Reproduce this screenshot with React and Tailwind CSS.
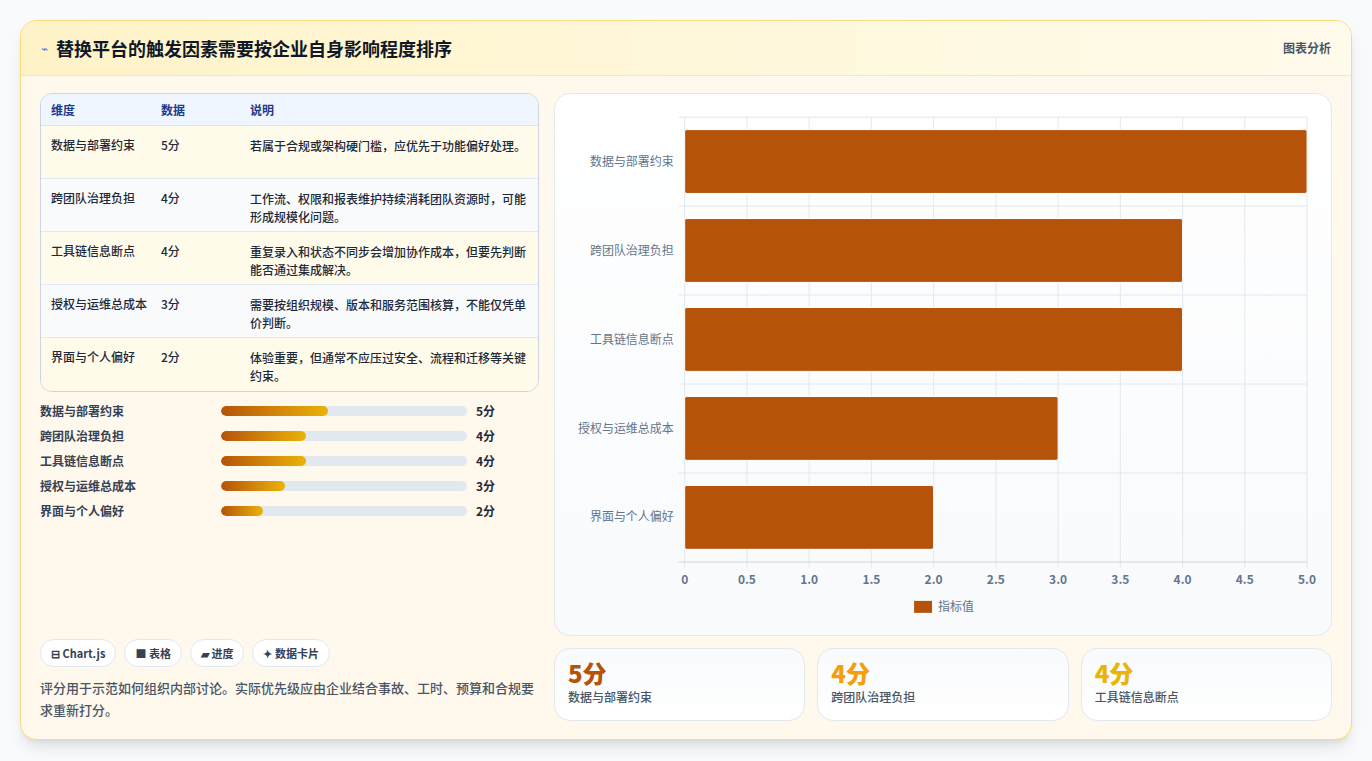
const rows = [
  { name: "数据与部署约束", score: 5, note: "若属于合规或架构硬门槛，应优先于功能偏好处理。", w: 107 },
  { name: "跨团队治理负担", score: 4, note: "工作流、权限和报表维护持续消耗团队资源时，可能形成规模化问题。", w: 85 },
  { name: "工具链信息断点", score: 4, note: "重复录入和状态不同步会增加协作成本，但要先判断能否通过集成解决。", w: 85 },
  { name: "授权与运维总成本", score: 3, note: "需要按组织规模、版本和服务范围核算，不能仅凭单价判断。", w: 64 },
  { name: "界面与个人偏好", score: 2, note: "体验重要，但通常不应压过安全、流程和迁移等关键约束。", w: 42 },
];

const font = { fontFamily: '"Noto Sans CJK SC", "Noto Sans", sans-serif' };

function Chart() {
  const x0 = 130, x1 = 754, y0 = 23, y1 = 469;
  const step = (x1 - x0) / 10;
  const rowH = (y1 - y0) / 5;
  return (
    <svg viewBox="0 0 778 542" className="w-full h-full" style={font}>
      {Array.from({ length: 11 }).map((_, i) => (
        <line key={i} x1={x0 + i * step} x2={x0 + i * step} y1={y0} y2={y1 + 6} stroke="#e2e8f0" />
      ))}
      {Array.from({ length: 6 }).map((_, i) => (
        <line key={i} x1={x0 - 6} x2={x1} y1={y0 + i * rowH} y2={y0 + i * rowH} stroke={i === 5 ? "#cbd5e1" : "#e2e8f0"} />
      ))}
      {rows.map((r, i) => (
        <g key={r.name}>
          <rect x={x0} y={y0 + i * rowH + 12.5} width={r.score * 2 * step} height={64} fill="#b45309" stroke="#fff" strokeWidth="1" rx="2" />
          <text x={x0 - 11} y={y0 + i * rowH + rowH / 2 + 4} textAnchor="end" fontSize="12" fill="#64748b">{r.name}</text>
        </g>
      ))}
      {Array.from({ length: 11 }).map((_, i) => (
        <text key={i} x={x0 + i * step} y={491} textAnchor="middle" fontSize="12" fontWeight="600" fill="#64748b">
          {i === 0 ? "0" : (i / 2).toFixed(1)}
        </text>
      ))}
      <rect x={360} y={508} width={18} height={12} fill="#b45309" />
      <text x={384} y={518} fontSize="12" fill="#64748b">指标值</text>
    </svg>
  );
}

export default function App() {
  return (
    <div className="min-h-screen bg-gray-50 p-5 pb-6" style={font}>
      <div className="rounded-2xl border border-[#fcd97a] bg-[#fff8ec] shadow-lg overflow-hidden">
        <div className="flex items-center justify-between h-[55px] px-5 bg-gradient-to-r from-[#fef3c7] to-[#fffbeb] border-b border-[#f3e6c4]">
          <div className="flex items-center gap-2">
            <span className="text-[#3b82f6] text-xs">⌁</span>
            <h1 className="text-lg font-bold text-gray-900">替换平台的触发因素需要按企业自身影响程度排序</h1>
          </div>
          <span className="text-xs font-semibold text-gray-600">图表分析</span>
        </div>
        <div className="flex gap-[15px] px-[19px] pt-[17px] pb-[18px]">
          <div className="w-[499px] flex flex-col">
            <div className="rounded-xl border border-[#cbd5e1] overflow-hidden text-xs">
              <div className="flex h-8 items-center bg-[#eff6ff] font-semibold text-[#1e3a8a] border-b border-[#dbe3ee]">
                <div className="w-[120px] pl-[10px]">维度</div>
                <div className="w-[89px]">数据</div>
                <div className="flex-1">说明</div>
              </div>
              {rows.map((r, i) => (
                <div key={r.name} className={`flex h-[53px] pt-[11px] text-gray-800 ${i % 2 === 0 ? "bg-[#fffbeb]" : "bg-[#f8fafc]"} ${i < 4 ? "border-b border-[#e2e8f0]" : ""}`}>
                  <div className="w-[120px] pl-[10px] font-medium">{r.name}</div>
                  <div className="w-[89px] font-medium">{r.score}分</div>
                  <div className="flex-1 pr-3 leading-[18px] font-medium">{r.note}</div>
                </div>
              ))}
            </div>
            <div className="mt-[10px] flex flex-col gap-[7px]">
              {rows.map((r) => (
                <div key={r.name} className="flex items-center h-[18px] text-xs font-semibold text-gray-700">
                  <div className="w-[181px]">{r.name}</div>
                  <div className="w-[246px] h-[10px] rounded-full bg-[#e2e8f0] overflow-hidden">
                    <div className="h-full rounded-full bg-gradient-to-r from-[#b45309] to-[#eab308]" style={{ width: r.w }} />
                  </div>
                  <div className="ml-[9px] text-gray-800">{r.score}分</div>
                </div>
              ))}
            </div>
            <div className="flex-1" />
            <div className="flex gap-2 text-[11px] font-semibold text-gray-700">
              {["⊟ Chart.js", "■ 表格", "▰ 进度", "✦ 数据卡片"].map((t) => (
                <span key={t} className="rounded-full border border-[#e2e8f0] bg-white px-[10px] h-7 flex items-center">{t}</span>
              ))}
            </div>
            <p className="mt-[10px] text-[13px] leading-[22px] font-medium text-gray-600">评分用于示范如何组织内部讨论。实际优先级应由企业结合事故、工时、预算和合规要求重新打分。</p>
          </div>
          <div className="flex-1 flex flex-col gap-3">
            <div className="h-[543px] rounded-2xl border border-[#e2e8f0] bg-gradient-to-b from-white to-[#f8fafc]">
              <Chart />
            </div>
            <div className="grid grid-cols-3 gap-3">
              {[["5分", "text-[#b45309]", "数据与部署约束"], ["4分", "text-[#f59e0b]", "跨团队治理负担"], ["4分", "text-[#eab308]", "工具链信息断点"]].map(([v, c, l]) => (
                <div key={l} className="h-[73px] rounded-2xl border border-[#e2e8f0] bg-gradient-to-b from-[#f8fafc] to-white px-[13px] pt-2">
                  <div className={`text-2xl font-extrabold ${c}`}>{v}</div>
                  <div className="text-xs font-medium text-gray-600">{l}</div>
                </div>
              ))}
            </div>
          </div>
        </div>
      </div>
    </div>
  );
}
